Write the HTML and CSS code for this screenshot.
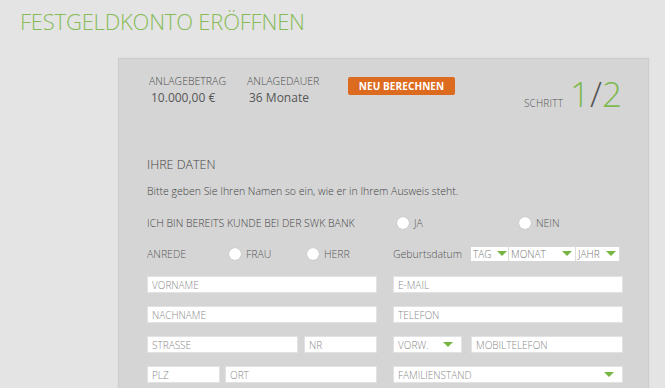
FILE: index.html
```html
<!DOCTYPE html>
<html lang="de">
<head>
<meta charset="utf-8">
<title>Festgeldkonto eröffnen</title>
<link rel="stylesheet" href="styles.css">
</head>
<body>
<h1 class="title">FESTGELDKONTO ERÖFFNEN</h1>
<main class="panel">
  <section class="summary">
    <div class="sum-item sum-amount">
      <div class="sum-label">ANLAGEBETRAG</div>
      <div class="sum-value">10.000,00 €</div>
    </div>
    <div class="sum-item sum-duration">
      <div class="sum-label">ANLAGEDAUER</div>
      <div class="sum-value">36 Monate</div>
    </div>
    <button class="btn-recalc" type="button">NEU BERECHNEN</button>
    <div class="step">
      <span class="step-label">SCHRITT</span>
      <span class="step-num">1<span class="slash">/</span>2</span>
    </div>
  </section>

  <section class="form">
    <h2 class="section-title">IHRE DATEN</h2>
    <p class="hint">Bitte geben Sie Ihren Namen so ein, wie er in Ihrem Ausweis steht.</p>

    <div class="grid">
      <div class="row-label">ICH BIN BEREITS KUNDE BEI DER SWK BANK</div>
      <div class="radios radios-kunde">
        <label class="radio"><span class="dot"></span>JA</label>
        <label class="radio"><span class="dot"></span>NEIN</label>
      </div>

      <div class="radios radios-anrede">
        <span class="anrede-label">ANREDE</span>
        <label class="radio"><span class="dot"></span>FRAU</label>
        <label class="radio"><span class="dot"></span>HERR</label>
      </div>
      <div class="birth">
        <span class="birth-label">Geburtsdatum</span>
        <div class="dsel dsel-tag">TAG<span class="arrow"></span></div>
        <div class="dsel dsel-monat">MONAT<span class="arrow"></span></div>
        <div class="dsel dsel-jahr">JAHR<span class="arrow"></span></div>
      </div>

      <input class="field" placeholder="VORNAME">
      <input class="field" placeholder="E-MAIL">

      <input class="field" placeholder="NACHNAME">
      <input class="field" placeholder="TELEFON">

      <div class="split split-street">
        <input class="field" placeholder="STRASSE">
        <input class="field" placeholder="NR">
      </div>
      <div class="split split-phone">
        <div class="select">VORW.<span class="arrow"></span></div>
        <input class="field" placeholder="MOBILTELEFON">
      </div>

      <div class="split split-city">
        <input class="field" placeholder="PLZ">
        <input class="field" placeholder="ORT">
      </div>
      <div class="select">FAMILIENSTAND<span class="arrow"></span></div>
    </div>
  </section>
</main>
</body>
</html>
```

FILE: styles.css
```css
* { box-sizing: border-box; }

html, body {
  margin: 0;
  height: 100%;
}

body {
  background: #e4e4e4;
  font-family: "Open Sans", "Liberation Sans", sans-serif;
  color: #555;
  overflow: hidden;
}

.title {
  margin: 0;
  padding: 8px 0 0 20px;
  font-size: 22px;
  line-height: 27px;
  font-weight: 300;
  color: #86bb55;
  letter-spacing: -0.2px;
}

.panel {
  margin: 23px 0 0 118px;
  width: 531px;
  height: 330px;
  background: #d5d5d5;
  border: 1px solid #cdcdcd;
  border-bottom: 0;
  box-shadow: 0 0 2px rgba(0,0,0,0.06);
  padding: 0 26px 0 28px;
}

/* summary */
.summary {
  display: flex;
  align-items: flex-start;
  padding-top: 15px;
  height: 98px;
}

.sum-item { display: flex; flex-direction: column; }
.sum-amount { margin-left: 2px; width: 98px; }
.sum-duration { width: 101px; }

.sum-label {
  font-size: 10.5px;
  line-height: 15px;
  font-weight: 300;
  color: #4a4a4a;
}

.sum-value {
  font-size: 12px;
  line-height: 18px;
  font-weight: 400;
  color: #555;
  padding-left: 2px;
}

.btn-recalc {
  margin-top: 3px;
  height: 18px;
  width: 107px;
  padding: 0;
  border: 0;
  border-radius: 2px;
  background: #dc6a1f;
  color: #fff;
  font-family: inherit;
  font-size: 10px;
  font-weight: 700;
  letter-spacing: 0.1px;
}

.step {
  margin-left: auto;
  margin-right: 0;
  display: flex;
  align-items: baseline;
}

.step-label {
  font-size: 10px;
  font-weight: 300;
  color: #555;
  margin-right: 7px;
  letter-spacing: 0.2px;
}

.step-num {
  font-size: 35px;
  line-height: 40px;
  font-weight: 300;
  color: #7fb84d;
}

.slash { color: #555; }

/* form */
.section-title {
  margin: 0;
  padding-top: 0;
  font-size: 12.5px;
  line-height: 16px;
  font-weight: 300;
  color: #444;
}

.hint {
  margin: 11px 0 0;
  font-size: 10.5px;
  line-height: 14px;
  font-weight: 300;
  color: #444;
}

.grid {
  margin-top: 17px;
  display: grid;
  grid-template-columns: 230px 230px;
  grid-template-rows: 16px 19px repeat(4, 17px);
  column-gap: 16px;
  row-gap: 13px;
  align-items: center;
}

.row-label {
  font-size: 10.5px;
  line-height: 14px;
  font-weight: 300;
  color: #444;
}

.radios {
  display: flex;
  align-items: center;
  font-size: 10.5px;
  font-weight: 300;
  color: #555;
}

.radios-kunde { padding-left: 4px; }
.radios-kunde .radio:first-child { width: 122px; }

.anrede-label { width: 82px; }
.radios-anrede .radio:nth-child(2) { width: 78px; }

.radio {
  display: flex;
  align-items: center;
}

.dot {
  width: 12px;
  height: 12px;
  border-radius: 50%;
  background: #fff;
  box-shadow: 0 0 1px rgba(0,0,0,0.25);
  margin-right: 5px;
}

.birth {
  display: flex;
  align-items: center;
  font-size: 10.5px;
  font-weight: 300;
}

.birth-label { width: 78px; color: #555; }

.dsel {
  height: 14px;
  background: #fff;
  display: flex;
  align-items: center;
  justify-content: space-between;
  padding: 0 3px 0 2px;
  font-size: 10px;
  color: #777;
  border-right: 1px solid #ddd;
}
.dsel-tag { width: 38px; padding-right: 1px; }
.dsel-monat { width: 67px; }
.dsel-jahr { width: 44px; }

.arrow {
  width: 0;
  height: 0;
  border-left: 5px solid transparent;
  border-right: 5px solid transparent;
  border-top: 5px solid #77b543;
}

.field, .select {
  height: 17px;
  width: 100%;
  margin: 0;
  border: 1px solid #e2e2e2;
  background: #fff;
  padding: 0 4px;
  font-family: inherit;
  font-size: 10px;
  font-weight: 300;
  color: #888;
  outline: none;
}

.field::placeholder { color: #8a8a8a; }

.select {
  display: flex;
  align-items: center;
  justify-content: space-between;
  padding-right: 8px;
}

.split { display: flex; gap: 6px; }
.split-street .field:first-child { width: 151px; flex: none; }
.split-street .field:last-child { flex: 1; }
.split-phone { gap: 9px; }
.split-phone .select { width: 69px; flex: none; }
.split-phone .field { flex: 1; }
.split-city { gap: 5px; }
.split-city .field:first-child { width: 73px; flex: none; }
.split-city .field:last-child { flex: 1; }
```
